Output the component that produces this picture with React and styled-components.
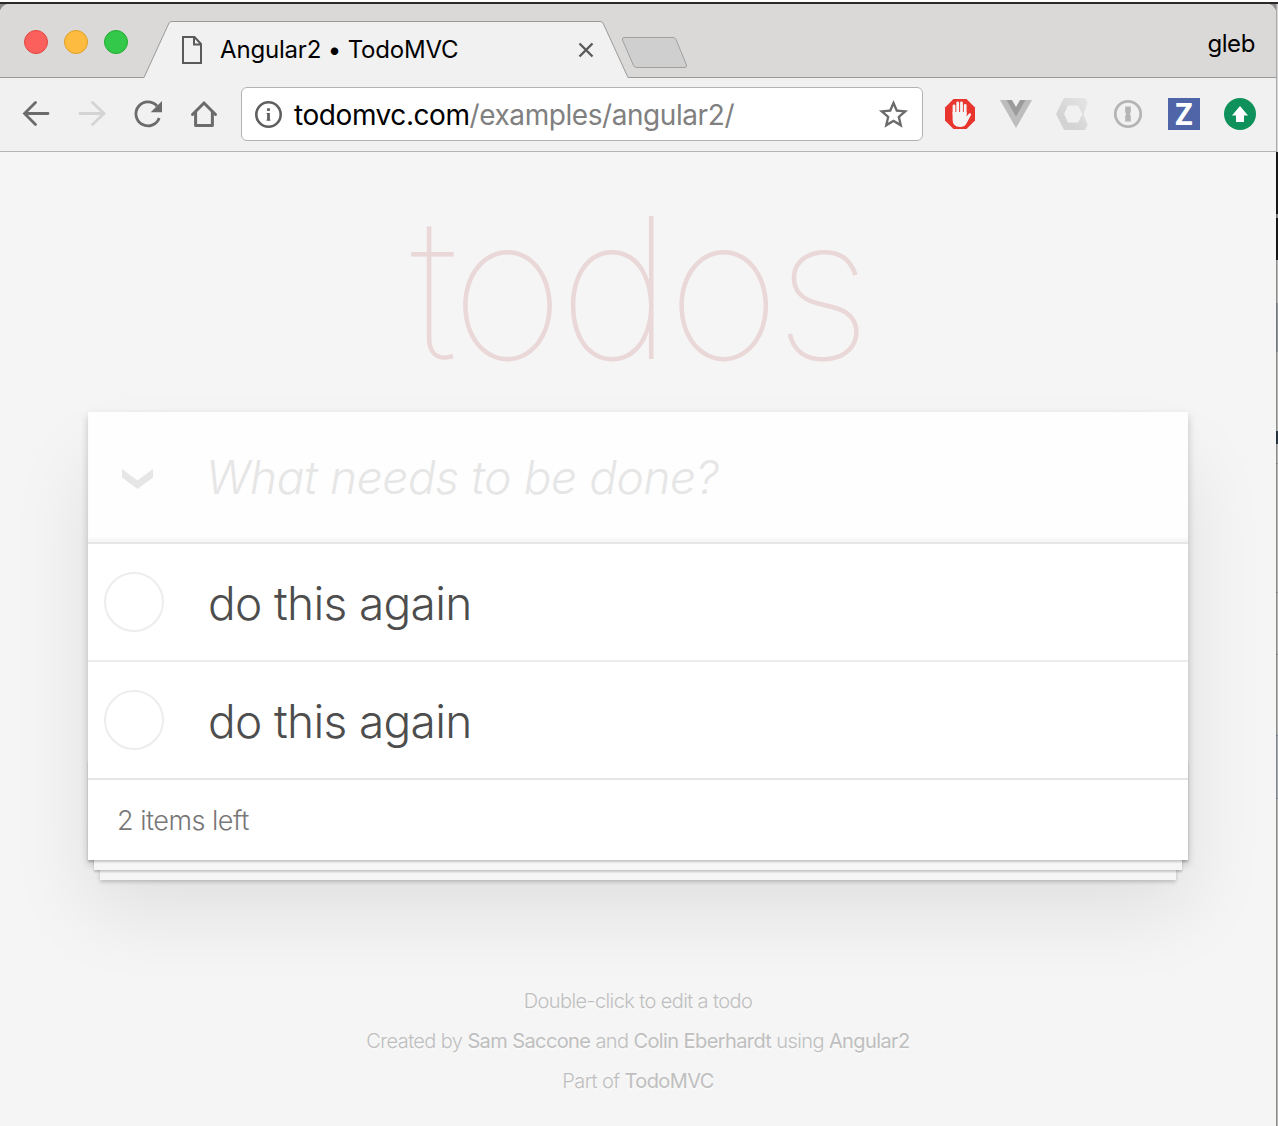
import React from 'react'
import styled, { createGlobalStyle } from 'styled-components'
import { MdStarBorder } from 'react-icons/md'

const GlobalStyle = createGlobalStyle`
  *{ box-sizing:border-box; }
  body{ margin:0; background:#f5f5f5; overflow:hidden; }
`;

let Screen = styled.div`
  width:1278px;
  height:1126px;
  display:flex;
  padding-top:4px;
  overflow:hidden;
  background:linear-gradient(#fff 0 2px, #2b2727 2px 4px, #8e8e8e 4px);
`;

let Window = styled.div`
  width:1276px;
  display:flex;
  flex-direction:column;
  border-radius:9px 9px 0 0;
  overflow:hidden;
  background:#f5f5f5;
`;

// sliver of the window that lies behind this one
let Edge = styled.div`
  width:2px;
  background:
    linear-gradient(90deg, rgba(0,0,0,.22) 50%, transparent 50%),
    linear-gradient(
      #d8d8d8 0 148px, #1a1a1a 148px 210px, #8c8c8c 210px 214px, #1a1a1a 214px 256px,
      #b5b5b3 256px 299px, #8f979b 299px 348px, #b5b5b3 348px 427px, #2c3a48 427px 440px,
      #b5b5b3 440px 459px, #999 459px 460px, #b5b5b3 460px 588px, #999 588px 589px,
      #b5b5b3 589px 650px, #999 650px 651px, #b5b5b3 651px 731px, #8592a8 731px 732px,
      #a4abb2 732px 794px, #8592a8 794px 795px, #b5b5b3 795px
    );
`;

let TabStrip = styled.div`
  height:74px;
  display:flex;
  align-items:flex-start;
  border-bottom:1px solid #999;
  background:#dad9d8;
`;

let Lights = styled.div`
  display:flex;
  gap:16px;
  padding:26px 16px 0 24px;
`;

let Light = styled.div`
  width:24px;
  height:24px;
  border-radius:50%;
  background:${({ $color }) => $color};
  border:1px solid ${({ $edge }) => $edge};
`;

let Tab = styled.div`
  position:relative;
  width:484px;
  height:74px;
  display:flex;
  align-items:center;
  padding:18px 34px 0 38px;
`;

let TabShape = styled.svg`
  position:absolute;
  left:0;
  top:0;
`;

let DocIcon = styled.svg`position:relative;`;
let TabTitle = styled.div`
  position:relative;
  flex:1;
  margin-left:18px;
  font:400 24px/28px Inter, sans-serif;
  letter-spacing:-.18px;
  color:#000;
`;
let CloseIcon = styled.svg`position:relative;`;
let NewTab = styled.svg`margin:32px 0 0 -8px;`;

let Profile = styled.div`
  margin:26px 21px 0 auto;
  font:400 24px/28px Inter, sans-serif;
  letter-spacing:-.4px;
  color:#000;
`;

let Toolbar = styled.div`
  height:74px;
  display:flex;
  padding:0 8px;
  border-bottom:1px solid #b4b4b4;
  background:#f1f1f1;
`;

let Slot = styled.div`
  width:56px;
  height:72px;
  display:flex;
  align-items:center;
  justify-content:center;
`;

let AddressBar = styled.div`
  width:682px;
  height:54px;
  margin:9px 9px 0;
  padding:0 11px 0 11px;
  display:flex;
  align-items:center;
  background:#fff;
  border:1px solid #b3b3b3;
  border-radius:6px;
`;

let Url = styled.div`
  flex:1;
  margin:2px 0 0 11px;
  font:400 28px/34px Inter, sans-serif;
  letter-spacing:-.43px;
  color:#000;
  &>span{ color:#808080; }
`;

let Page = styled.div`
  flex:1;
  display:flex;
  flex-direction:column;
  align-items:center;
  font-family:Inter, "Liberation Sans", sans-serif;
  font-weight:300;
`;

let Title = styled.h1`
  height:260px;
  margin:0;
  font-size:196px;
  font-weight:100;
  letter-spacing:-5.6px;
  line-height:271px;
  color:#ead7d7;
`;

let TodoApp = styled.div`
  width:1100px;
  background:#fff;
  box-shadow:0 4px 8px rgba(0,0,0,.2), 0 50px 76px rgba(0,0,0,.09);
`;

let NewTodo = styled.div`
  height:130px;
  display:flex;
  align-items:center;
  padding-left:32px;
  background:#fefefe;
  box-shadow:inset 0 -4px 2px rgba(0,0,0,.03);
`;

let Chevron = styled.svg`margin-top:4px;`;

let Placeholder = styled.div`
  margin-left:52px;
  font-size:46px;
  font-style:italic;
  letter-spacing:-.4px;
  line-height:60px;
  color:#e6e6e6;
`;

let Row = styled.div`
  height:118px;
  display:flex;
  align-items:center;
  padding-left:16px;
  border-top:2px solid ${({ $first }) => $first ? '#e6e6e6' : '#ededed'};
`;

let Circle = styled.div`
  width:60px;
  height:60px;
  border:2px solid #ededed;
  border-radius:50%;
`;

let Label = styled.div`
  margin:2px 0 0 44px;
  font-size:46px;
  letter-spacing:-.65px;
  line-height:58px;
  color:#4d4d4d;
`;

let Footer = styled.div`
  position:relative;
  height:82px;
  padding:21px 29px;
  border-top:2px solid #e6e6e6;
  font-size:27px;
  letter-spacing:-.5px;
  line-height:40px;
  color:#777;
  &:before{
    content:'';
    position:absolute;
    left:0;
    right:0;
    bottom:0;
    height:100px;
    box-shadow:0 2px 2px rgba(0,0,0,.2), 0 16px 0 -6px #f6f6f6, 0 18px 2px -6px rgba(0,0,0,.2), 0 32px 0 -12px #f6f6f6, 0 34px 4px -12px rgba(0,0,0,.2);
  }
`;

let Info = styled.div`
  margin-top:121px;
  text-align:center;
  font-size:20px;
  letter-spacing:-.6px;
  line-height:40px;
  color:#bfbfbf;
  text-shadow:0 2px 0 rgba(255,255,255,.5);
  &>p{ margin:0; }
  b{ font-weight:400; }
`;

const ArrowIcon = ({ color, flip }) => (
  <svg width="40" height="40" fill="none" stroke={color} strokeWidth="2.8" strokeLinecap="round">
    <path d={flip ? 'M8 19.5H31M20.5 8.5L32 19.5L20.5 30.5' : 'M32 19.5H9M19.5 8.5L8.5 19.5L19.5 30.5'} />
  </svg>
)

const ReloadIcon = () => (
  <svg width="40" height="40" fill="none">
    <path d="M31.2 24A12 12 0 1 1 29 12" stroke="#6b6b6b" strokeWidth="2.8" />
    <path d="M34 7V18.3H22.7Z" fill="#6b6b6b" />
  </svg>
)

const HomeIcon = () => (
  <svg width="40" height="40" fill="none" stroke="#6b6b6b" strokeWidth="3">
    <path d="M8.5 20.5L20 9L31.5 20.5" strokeLinecap="round" />
    <path d="M11.6 18V31.6H28.4V18" strokeLinejoin="round" />
  </svg>
)

const InfoIcon = () => (
  <svg width="30" height="30" fill="none">
    <circle cx="15.5" cy="15.5" r="12.2" stroke="#5f5f5f" strokeWidth="2.6" />
    <path d="M15.5 14V21.5M15.5 9.3V12.1" stroke="#5f5f5f" strokeWidth="2.8" />
    <path d="M13.5 14.5H15.500M13.500 21.100H17.500" stroke="#5f5f5f" />
  </svg>
)

const AdblockIcon = () => (
  <svg width="40" height="40">
    <path d="M13.5 5H26.5L35 13.5V26.5L26.5 35H13.5L5 26.5V13.5Z" fill="#e8352e" />
    <path d="M14 20V11.8M17.7 19V8.8M21.5 19V8.8M25.2 20V11.5" stroke="#f4f4f4" strokeWidth="2.8" strokeLinecap="round" />
    <path d="M12.6 18H26.6V22.5L29 19.5Q31.500 18.500 31 21L27 28.500Q25 33 20 33Q12.6 32.500 12.6 26Z" fill="#f4f4f4" />
  </svg>
)

const VueIcon = () => (
  <svg width="40" height="40">
    <path d="M4 6H36L20 34Z" fill="#bdbdbd" />
    <path d="M10.500 6H29.500L20 22.500Z" fill="#9b9b9b" />
    <path d="M16 6H24L20 13Z" fill="#f1f1f1" />
  </svg>
)

const PolymerIcon = () => (
  <svg width="40" height="40">
    <defs>
      <linearGradient id="polymer" x1="1" y1="0" x2=".3" y2=".7">
        <stop offset="0" stopColor="#e6e6e6" />
        <stop offset="1" stopColor="#d3d3d3" />
      </linearGradient>
    </defs>
    <path d="M12 4H33L35.7 8L31.5 20L35.7 31L33 36H12L4 20Z" fill="url(#polymer)" />
    <path d="M16 11.500H26L30.500 20L26 28.500H16L12 20Z" fill="#f1f1f1" />
  </svg>
)

const OnePasswordIcon = () => (
  <svg width="40" height="40" fill="none">
    <circle cx="20" cy="20" r="12.700" stroke="#b5b5b5" strokeWidth="2.8" />
    <path d="M17.200 12.500H22.800V18L21.800 20L22.800 21.500V27.500H17.200V22L18.200 20L17.200 18.500Z" fill="#b5b5b5" />
  </svg>
)

let Zed = styled.div`
  width:32px;
  height:32px;
  background:#5064a8;
  color:#fff;
  text-align:center;
  font:700 30px/31px "Open Sans", sans-serif;
`;

const UpIcon = () => (
  <svg width="40" height="40">
    <circle cx="20" cy="20" r="16" fill="#0f915c" />
    <path d="M20 12L28 21.500H24V28H16V21.500H12Z" fill="#fff" />
  </svg>
)

const App = () => {

  const lights = [
    { color: '#fc605c', edge: '#e2463f' },
    { color: '#fdbc40', edge: '#dfa023' },
    { color: '#34c84a', edge: '#1fac2c' }
  ]

  const navIcons = [
    <ArrowIcon color="#6b6b6b" />,
    <ArrowIcon color="#d4d4d4" flip />,
    <ReloadIcon />,
    <HomeIcon />
  ]

  const extensions = [
    <AdblockIcon />,
    <VueIcon />,
    <PolymerIcon />,
    <OnePasswordIcon />,
    <Zed>Z</Zed>,
    <UpIcon />
  ]

  const todos = ['do this again', 'do this again']

  return (
    <Screen>
      <GlobalStyle />
      <Window>
        <TabStrip>
          <Lights>
            {lights.map((l, i) => <Light $color={l.color} $edge={l.edge} key={i} />)}
          </Lights>
          <Tab>
            <TabShape width="484" height="74">
              <path d="M0 73.500L25 19Q26 17.500 28 17.500H456Q458 17.500 459 19L484 73.500V74H0Z" fill="#f1f1f1" />
              <path d="M0 73.500L25 19Q26 17.500 28 17.500H456Q458 17.500 459 19L484 73.500" fill="none" stroke="#999" />
            </TabShape>
            <DocIcon width="20" height="28" fill="none" stroke="#5a5a5a" strokeWidth="2">
              <path d="M1 1H12.500L19 8V27H1ZM12 1V8.500H19" />
            </DocIcon>
            <TabTitle>Angular2 • TodoMVC</TabTitle>
            <CloseIcon width="16" height="16" stroke="#5a5a5a" strokeWidth="2.400">
              <path d="M1.500 1.500L14.500 14.500M14.500 1.500L1.500 14.500" />
            </CloseIcon>
          </Tab>
          <NewTab width="68" height="34">
            <path d="M4 1.500H53Q55 1.500 56 3.500L66.500 29Q67 31.500 65 31.500H17Q14.500 31.500 13.500 29.500L2.500 4Q2 1.500 4 1.500Z" fill="#cfcfcf" stroke="#a0a0a0" />
          </NewTab>
          <Profile>gleb</Profile>
        </TabStrip>
        <Toolbar>
          {navIcons.map((icon, i) => <Slot key={i}>{icon}</Slot>)}
          <AddressBar>
            <InfoIcon />
            <Url>todomvc.com<span>/examples/angular2/</span></Url>
            <MdStarBorder size={35} color="#6b6b6b" />
          </AddressBar>
          {extensions.map((icon, i) => <Slot key={i}>{icon}</Slot>)}
        </Toolbar>
        <Page>
          <Title>todos</Title>
          <TodoApp>
            <NewTodo>
              <Chevron width="34" height="24" fill="#e6e6e6">
                <path d="M2 2L17.500 13.500L33 2V10.500L17.500 22L2 10.500Z" />
              </Chevron>
              <Placeholder>What needs to be done?</Placeholder>
            </NewTodo>
            {todos.map((todo, i) => (
              <Row $first={i === 0} key={i}>
                <Circle />
                <Label>{todo}</Label>
              </Row>
            ))}
            <Footer>2 items left</Footer>
          </TodoApp>
          <Info>
            <p>Double-click to edit a todo</p>
            <p>Created by <b>Sam Saccone</b> and <b>Colin Eberhardt</b> using <b>Angular2</b></p>
            <p>Part of <b>TodoMVC</b></p>
          </Info>
        </Page>
      </Window>
      <Edge />
    </Screen>
  )
}

export default App
